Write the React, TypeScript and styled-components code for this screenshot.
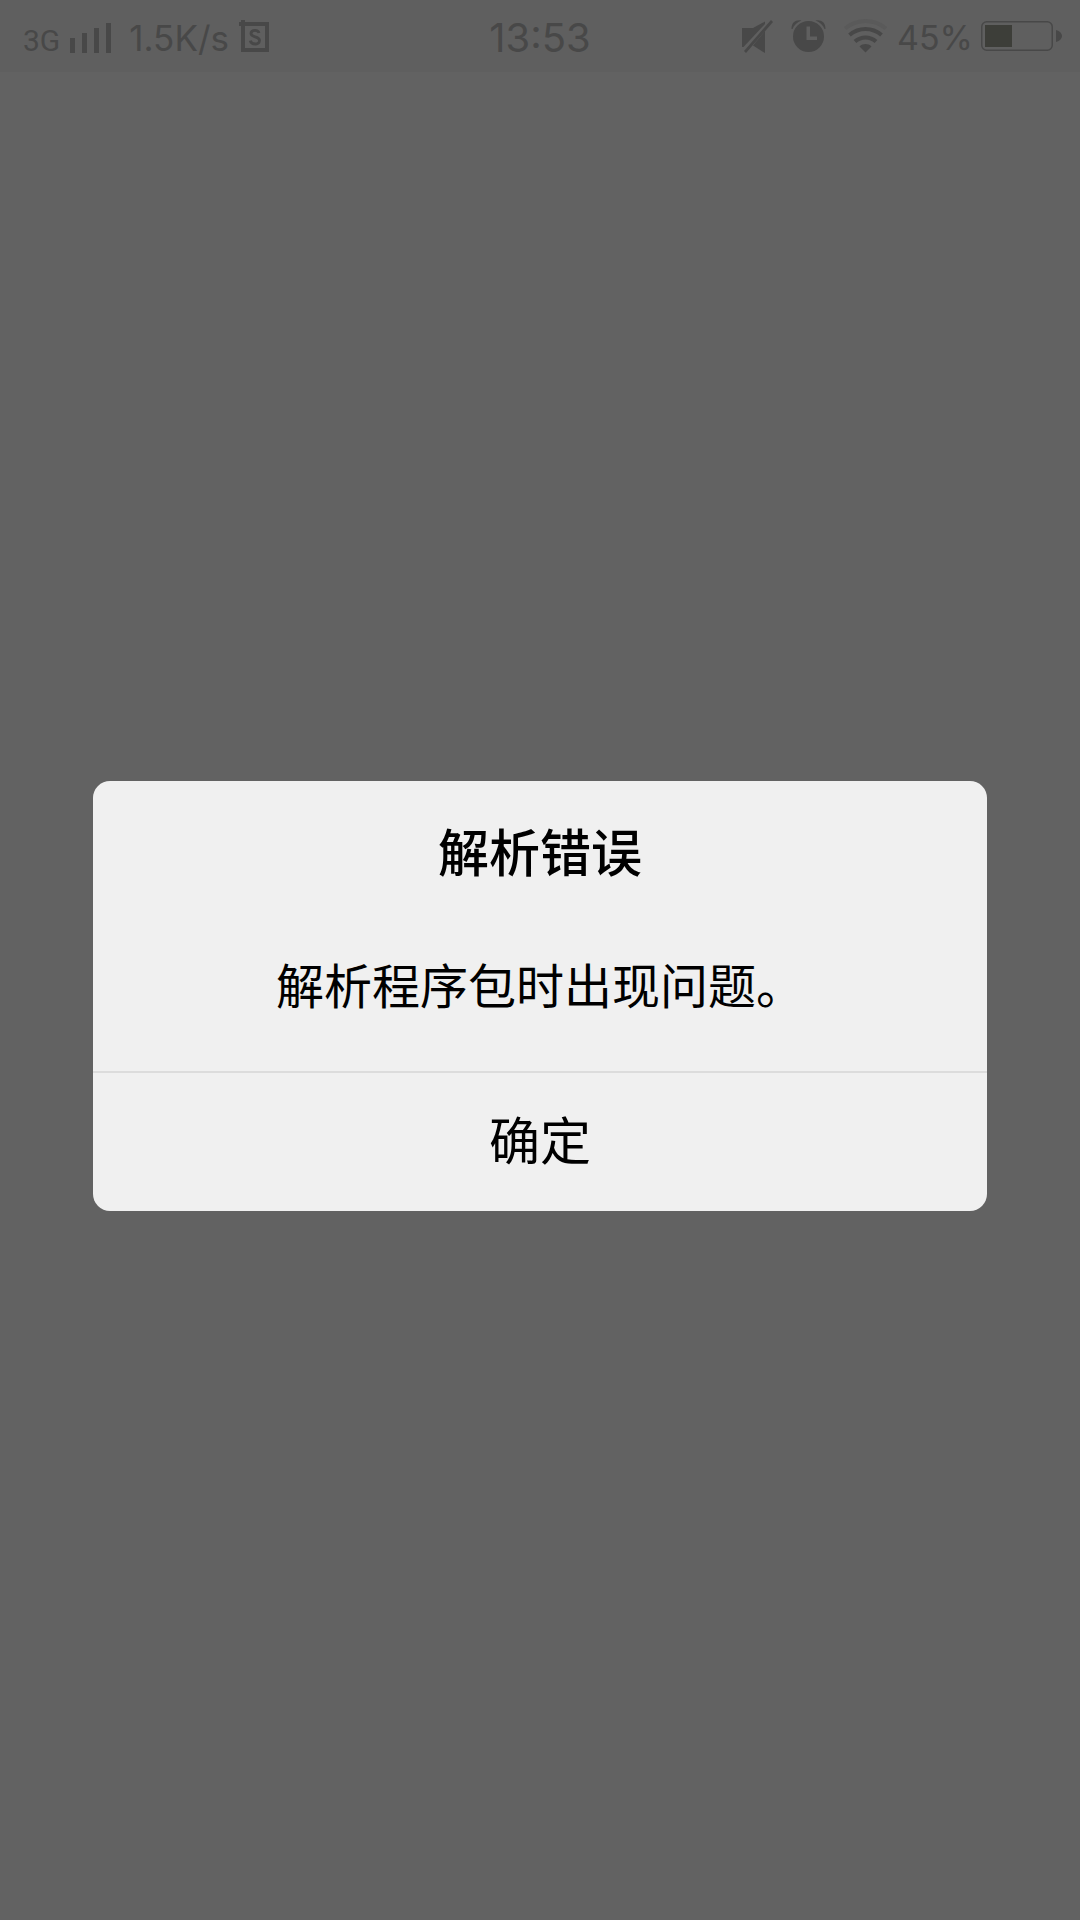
import React from "react";
import styled, { createGlobalStyle } from "styled-components";

const ink = "#484848";
const latin = `Inter, Roboto, "Noto Sans CJK SC", sans-serif`;
const han = `"Noto Sans CJK SC", "Noto Sans", sans-serif`;

const GlobalStyle = createGlobalStyle`
  *, *::before, *::after { box-sizing: border-box; }
  body { margin: 0; background: #626262; }
`;

const Screen = styled.div`
  min-height: 100vh;
  display: flex;
  flex-direction: column;
  background: #626262;
`;

const StatusBar = styled.header`
  display: grid;
  grid-template-columns: 1fr auto 1fr;
  align-items: center;
  height: 72px;
  padding: 0 18px;
  background: #5f5f5f;
  color: ${ink};
  font-family: ${latin};
`;

const Group = styled.div<{ $end?: boolean; $gap: number }>`
  display: flex;
  align-items: center;
  justify-content: ${(p) => (p.$end ? "flex-end" : "flex-start")};
  gap: ${(p) => p.$gap}px;
`;

const StatusText = styled.span<{ $size: number }>`
  padding-top: 3px;
  font-size: ${(p) => p.$size}px;
  line-height: 40px;
  white-space: nowrap;
`;

const Network = styled.span`
  display: flex;
  align-items: flex-end;
  height: 34px;
  padding-left: 5px;
  font-family: Roboto, sans-serif;
  font-size: 30px;
  line-height: 25px;
`;

const Icon = styled.svg`
  display: block;
  flex: none;
  fill: ${ink};
`;

const Backdrop = styled.main`
  flex: 1;
  display: flex;
  align-items: center;
  justify-content: center;
  padding: 0 93px;
`;

const Dialog = styled.section`
  width: 100%;
  overflow: hidden;
  border-radius: 17px;
  background: #f0f0f0;
  color: #000;
  font-family: ${han};
  text-align: center;
`;

const Content = styled.div`
  display: flex;
  flex-direction: column;
  gap: 63px;
  padding: 34px 24px 53px;
`;

const Title = styled.h1`
  margin: 0;
  font-size: 51px;
  line-height: 70px;
  font-weight: 500;
`;

const Message = styled.p`
  margin: 0;
  font-size: 48px;
  line-height: 70px;
  font-weight: 400;
`;

const Confirm = styled.button`
  display: block;
  width: 100%;
  padding: 31px 24px 39px;
  border: 0;
  border-top: 2px solid #dcdcdc;
  background: transparent;
  color: inherit;
  font-family: inherit;
  font-size: 51px;
  line-height: 68px;
  cursor: pointer;
`;

const SignalIcon = () => (
  <Icon width="41" height="34" viewBox="0 0 41 34" aria-hidden="true">
    <rect x="0" y="19" width="5" height="15" />
    <rect x="12" y="14" width="5" height="20" />
    <rect x="24" y="9" width="5" height="25" />
    <rect x="36" y="4" width="5" height="30" />
  </Icon>
);

const SimIcon = () => (
  <Icon width="30" height="34" viewBox="0 0 30 34" aria-hidden="true">
    <path fillRule="evenodd" d="M0 3H2V1H6V3H30V33H2V7H0ZM6 7V29H26V7Z" />
    <path
      d="M20 14C19.5 12 18 11.3 16 11.3C13.500 11.3 12 12.700 12 14.600C12 19 20.500 16.800 20.500 21.500C20.500 23.700 18.500 25 16.200 25C13.700 25 11.800 23.800 11.300 21.600"
      fill="none"
      stroke={ink}
      strokeWidth="2.8"
    />
  </Icon>
);

const MuteIcon = () => (
  <Icon width="31" height="34" viewBox="0 0 31 34" aria-hidden="true">
    <path d="M0 9H11L23 2.500V5L1.500 28H0Z" />
    <path d="M23 12V34L11 26.500Z" />
    <path d="M29 1L31 3L4 34L2 32Z" />
  </Icon>
);

const AlarmIcon = () => (
  <Icon width="35" height="34" viewBox="0 0 35 34" aria-hidden="true">
    <path d="M0.500 10C0.500 3 5 0.500 10.500 1.500C6 3.500 3 6 1.500 10Z" />
    <path d="M34.500 10C34.500 3 30 0.500 24.500 1.500C29 3.500 32 6 33.500 10Z" />
    <path
      fillRule="evenodd"
      d="M17.500 2A15.500 15.500 0 1 1 17.500 33A15.500 15.500 0 1 1 17.500 2ZM15.500 7.500V21H26V17.500H19V7.500Z"
    />
  </Icon>
);

const WifiIcon = () => (
  <Icon width="43" height="34" viewBox="0 0 43 34" aria-hidden="true">
    <g fill="none" stroke={ink} strokeWidth="4">
      <path d="M1 9.500C13 -0.500 30 -0.500 42 9.500" stroke="#5a5a5a" />
      <path d="M5.500 16C15 8 28 8 37.500 16" />
      <path d="M11 22.500C17 17 26 17 32 22.500" />
    </g>
    <path d="M21.500 33.500L15.500 27.500C19 24.300 24 24.300 27.500 27.500Z" />
  </Icon>
);

const BatteryIcon = () => (
  <Icon width="81" height="34" viewBox="0 0 81 34" aria-hidden="true">
    <rect x="0.750" y="2.750" width="70.500" height="28.500" rx="5" fill="none" stroke={ink} strokeWidth="1.5" />
    <rect x="4" y="6" width="27" height="22" fill="#3d3e39" />
    <path d="M75 11C79 12 81 14.500 81 17C81 19.500 79 22 75 23Z" />
  </Icon>
);

export default function App() {
  return (
    <>
      <GlobalStyle />
      <Screen>
        <StatusBar>
          <Group $gap={18}>
            <Group $gap={10}>
              <Network>3G</Network>
              <SignalIcon />
            </Group>
            <Group $gap={10}>
              <StatusText $size={35}>1.5K/s</StatusText>
              <SimIcon />
            </Group>
          </Group>
          <StatusText as="time" $size={40}>13:53</StatusText>
          <Group $end $gap={10}>
            <Group $gap={18}>
              <MuteIcon />
              <AlarmIcon />
              <WifiIcon />
            </Group>
            <Group $gap={8}>
              <StatusText $size={34}>45%</StatusText>
              <BatteryIcon />
            </Group>
          </Group>
        </StatusBar>
        <Backdrop>
          <Dialog role="alertdialog" aria-labelledby="dialog-title" aria-describedby="dialog-message">
            <Content>
              <Title id="dialog-title">解析错误</Title>
              <Message id="dialog-message">解析程序包时出现问题。</Message>
            </Content>
            <Confirm type="button">确定</Confirm>
          </Dialog>
        </Backdrop>
      </Screen>
    </>
  );
}
